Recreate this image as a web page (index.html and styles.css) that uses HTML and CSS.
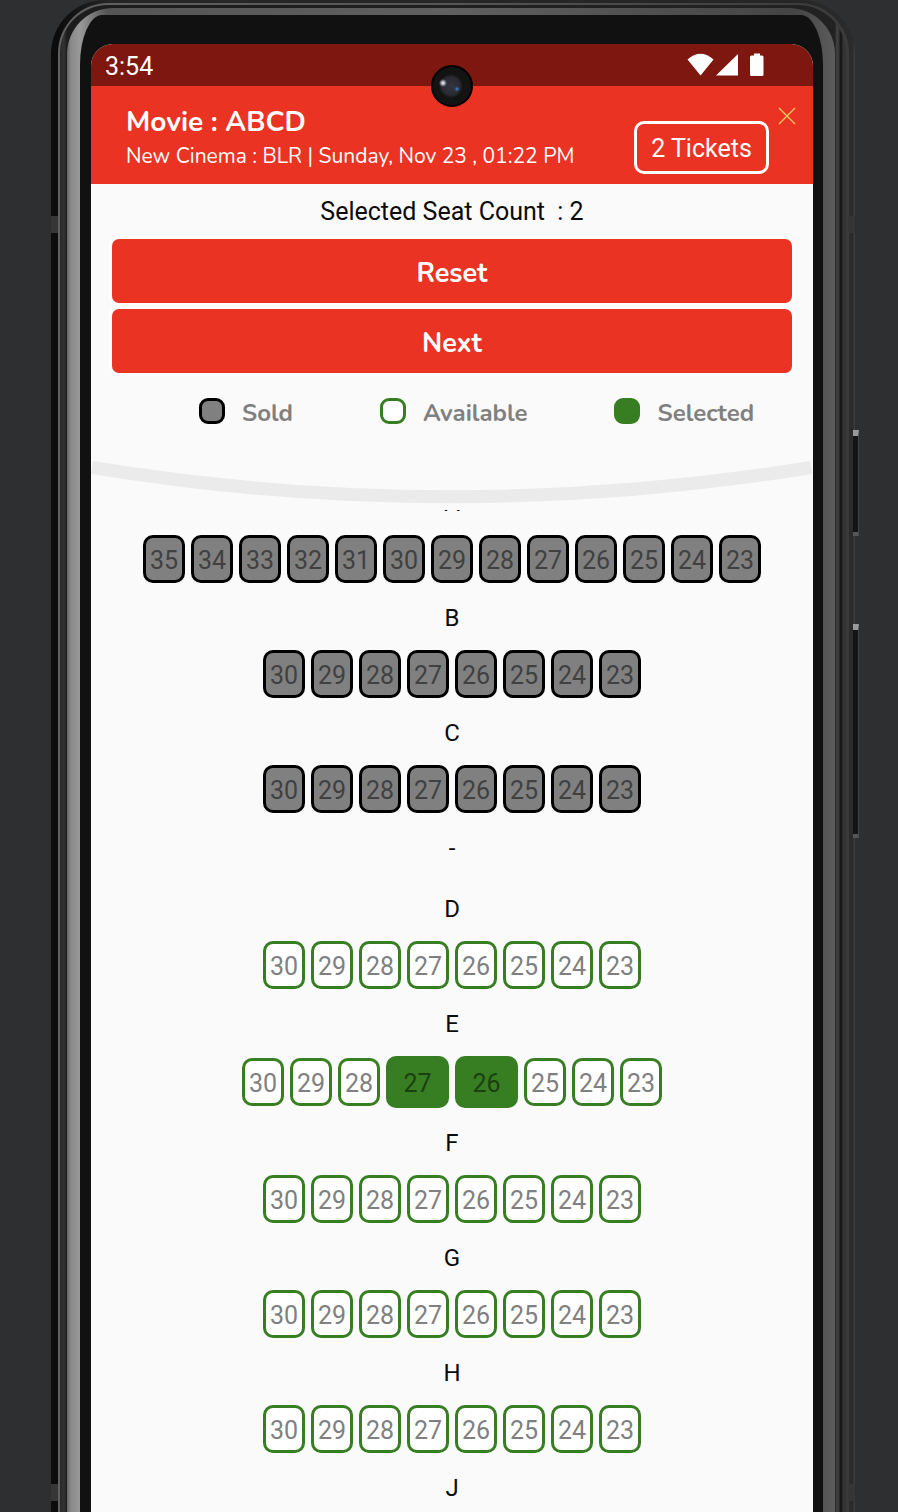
FILE: index.html
```html
<!DOCTYPE html>
<html lang="en">
<head>
<meta charset="utf-8">
<meta name="viewport" content="width=device-width, initial-scale=1">
<title>Seat selection</title>
<link rel="stylesheet" href="styles.css">
</head>
<body>
<div class="device">
  <span class="side-key side-key-power"></span>
  <span class="side-key side-key-volume"></span>
  <span class="band band-left"></span>
  <span class="band band-right"></span>
  <span class="band band-left band-low"></span>
  <span class="band band-right band-low"></span>
  <div class="rim">
    <div class="groove">
      <div class="shine">
        <div class="bezel">
          <main class="screen">
            <span class="camera"></span>
            <div class="status-bar">
              <time>3:54</time>
              <svg class="status-icons" width="78" height="24" viewBox="0 0 78 24" fill="#fff" aria-hidden="true">
                <path d="M0.500 6.500Q13.500-5 26.500 6.500L13.500 22.500Z"/>
                <path d="M51 1V22.500H29Z"/>
                <path d="M67 0.500h6v2h2q1.500 0 1.500 1.500v17.500q0 1.500-1.500 1.500h-10.500q-1.500 0-1.500-1.500v-17.500q0-1.500 1.500-1.500h2.500Z"/>
              </svg>
            </div>
            <header class="show">
              <div class="show-info">
                <h1>Movie : ABCD</h1>
                <p>New Cinema : BLR | Sunday, Nov 23 , 01:22 PM</p>
              </div>
              <button class="tickets" type="button">2 Tickets</button>
              <button class="close" type="button" aria-label="Close">
                <svg width="18" height="18" viewBox="0 0 18 18" fill="none" stroke="#f8c860" stroke-width="1.400"><path d="M1 1L17 17M17 1L1 17"/></svg>
              </button>
            </header>
            <p class="count">Selected Seat Count&nbsp; : 2</p>
            <div class="actions">
              <button type="button">Reset</button>
              <button type="button">Next</button>
            </div>
            <ul class="legend">
              <li><span class="swatch sold"></span>Sold</li>
              <li><span class="swatch available"></span>Available</li>
              <li><span class="swatch selected"></span>Selected</li>
            </ul>
            <svg class="stage" viewBox="0 0 722 56" fill="none" aria-hidden="true">
              <path d="M1 13.500Q360.500 72 720 13.500" stroke="#ebebeb" stroke-width="13"/>
            </svg>
            <section class="seat-map" aria-label="Seats"></section>
          </main>
        </div>
      </div>
    </div>
  </div>
</div>
<script src="seats.js"></script>
</body>
</html>
```

FILE: styles.css
```css
* {
  box-sizing: border-box;
}

body {
  margin: 0;
  min-height: 100vh;
  display: flex;
  overflow: hidden;
  background: #2e2f31;
  font-family: Roboto, "Liberation Sans", sans-serif;
  font-size: 25px;
  color: #0b0b0b;
}

h1,
p,
ul {
  margin: 0;
  padding: 0;
}

button {
  margin: 0;
  padding: 0;
  border: 0;
  background: none;
  font: inherit;
  color: inherit;
}

/* Phone body */
.device,
.rim,
.groove,
.shine,
.bezel,
.screen {
  flex: 1;
  min-width: 0;
  display: flex;
}

.device {
  position: relative;
  margin: 0 43px 0 51px;
  padding: 3px 6px 0 7px;
  border-radius: 54px 54px 0 0;
  background: linear-gradient(90deg, #0c0c0c 0, #0c0c0c 7px, #262626 60px, #262626 calc(100% - 60px), #2b2b2b calc(100% - 2px), #444 100%);
}

.rim {
  padding: 2px 3px 0 2px;
  border-radius: 50px 50px 0 0;
  background: linear-gradient(90deg, #606060 0, #555 50%, #3a3a3a 100%);
}

.groove {
  padding: 3px 11px 0 7px;
  border-radius: 48px 48px 0 0;
  background: linear-gradient(90deg, #282828 0, #333 4px, #1c1c1c 7px, #222 calc(100% - 11px), #444 calc(100% - 9px), #333 calc(100% - 7px), #101010 calc(100% - 5px), #333 calc(100% - 3px), #333 100%);
}

.shine {
  padding: 7px 12px 0 13px;
  border-radius: 46px 46px 0 0;
  background: linear-gradient(90deg, #666 0, #8a8a8a 4px, #999 13px, #555 40px, #606060 50%, #444 calc(100% - 40px), #5c5c5c 100%);
}

.bezel {
  padding: 29px 10px 0 11px;
  border-radius: 22px 22px 0 0 / 50px 50px 0 0;
  background: #111;
}

.screen {
  position: relative;
  flex-direction: column;
  border-radius: 22px 22px 0 0;
  background: #fafafa;
}

.side-key {
  position: absolute;
  right: -4px;
  width: 6px;
  border: 1px solid #444;
  border-top: 6px solid #999;
  border-bottom: 4px solid #555;
  border-left-width: 0;
  background: #141414;
}

.side-key-power {
  top: 430px;
  height: 106px;
}

.side-key-volume {
  top: 624px;
  height: 214px;
}

.band {
  position: absolute;
  top: 216px;
  height: 17px;
  width: 7px;
  background: #363636;
}

.band-left {
  left: 0;
}

.band-right {
  right: 0;
}

.band-low {
  top: 1484px;
}

.camera {
  position: absolute;
  top: 21px;
  left: 50%;
  width: 42px;
  height: 42px;
  margin-left: -21px;
  border: 2px solid #000;
  border-radius: 50%;
  background:
    radial-gradient(circle at 10px 16px, #fff 0, #ccd 1px, transparent 4px),
    radial-gradient(circle at 24px 22px, #58a8f0 0, #2a5a90 1px, transparent 3px),
    radial-gradient(circle at 18px 19px, #34343e 0, #2a2a32 9px, #131313 12px);
}

/* Top bars */
.status-bar {
  display: flex;
  align-items: center;
  justify-content: space-between;
  height: 42px;
  padding: 0 48px 0 14px;
  border-radius: 22px 22px 0 0;
  background: #7d170f;
  color: #fff;
}

.status-bar time {
  padding-top: 4px;
  line-height: 38px;
}

.show {
  display: flex;
  align-items: flex-start;
  padding: 19px 17px 10px 35px;
  background: #ea3323;
  color: #fff;
}

.show-info {
  flex: 1;
  font-family: Nunito, Lato, sans-serif;
}

.show-info h1 {
  font-size: 28px;
  line-height: 34px;
  font-weight: 700;
}

.show-info p {
  font-size: 21px;
  line-height: 34px;
}

.tickets {
  width: 135px;
  height: 53px;
  margin: 16px 9px 0 0;
  padding-top: 2px;
  border: 3px solid #fff;
  border-radius: 10px;
}

.close {
  display: flex;
  margin-top: 2px;
}

.count {
  padding-top: 2px;
  line-height: 52px;
  text-align: center;
}

.actions {
  display: flex;
  flex-direction: column;
  gap: 6px;
  padding: 1px 21px 0;
}

.actions button {
  height: 64px;
  padding-top: 4px;
  border-radius: 7px;
  background: #ea3323;
  box-shadow: 0 0 0 3px #fff;
  color: #fff;
  font: 700 27px Nunito, Lato, sans-serif;
}

.legend {
  display: flex;
  gap: 87px;
  padding: 24px 0 0 108px;
  list-style: none;
  font: 700 24px/32px Nunito, Lato, sans-serif;
  color: #808080;
}

.legend li {
  display: flex;
  gap: 17px;
}

.swatch {
  width: 26px;
  height: 26px;
  margin-top: 1px;
  border: 3px solid #377e22;
  border-radius: 9px;
}

.stage {
  display: block;
  width: 100%;
  margin-top: 25px;
}

/* Seats */
.sold {
  border-color: #000;
  background: #808080;
}

.available {
  background: #fff;
}

.selected {
  background: #377e22;
}

.seat-map {
  overflow: hidden;
}

.row-name {
  padding: 20px 0 17px;
  line-height: 30px;
  text-align: center;
  font-size: 24px;
  font-weight: 400;
}

.row-name:first-child {
  margin-top: -42px;
}

.row-name.aisle {
  padding-bottom: 11px;
}

.seat-row {
  display: flex;
  align-items: center;
  justify-content: center;
  gap: 6px;
}

.seat {
  width: 42px;
  height: 48px;
  padding-top: 2px;
  border: 3px solid #377e22;
  border-radius: 10px;
  color: #808080;
}

.seat.sold {
  border-color: #000;
  color: #404040;
}

.seat.selected {
  width: 63px;
  height: 52px;
  color: #1c3f11;
}
```

FILE: seats.js
```js
const rows = [
  { name: "A", from: 35, state: "sold" },
  { name: "B", from: 30, state: "sold" },
  { name: "C", from: 30, state: "sold" },
  { name: "-" },
  { name: "D", from: 30, state: "available" },
  { name: "E", from: 30, state: "available", picked: [27, 26] },
  { name: "F", from: 30, state: "available" },
  { name: "G", from: 30, state: "available" },
  { name: "H", from: 30, state: "available" },
  { name: "J" }
];

const map = document.querySelector(".seat-map");

for (const row of rows) {
  const name = document.createElement("p");
  name.className = row.name === "-" ? "row-name aisle" : "row-name";
  name.textContent = row.name;
  map.append(name);
  if (!row.from) continue;

  const line = document.createElement("div");
  line.className = "seat-row";
  for (let n = row.from; n >= 23; n--) {
    const state = row.picked && row.picked.includes(n) ? "selected" : row.state;
    const seat = document.createElement("button");
    seat.type = "button";
    seat.className = "seat " + state;
    seat.disabled = state === "sold";
    seat.textContent = n;
    line.append(seat);
  }
  map.append(line);
}
```
